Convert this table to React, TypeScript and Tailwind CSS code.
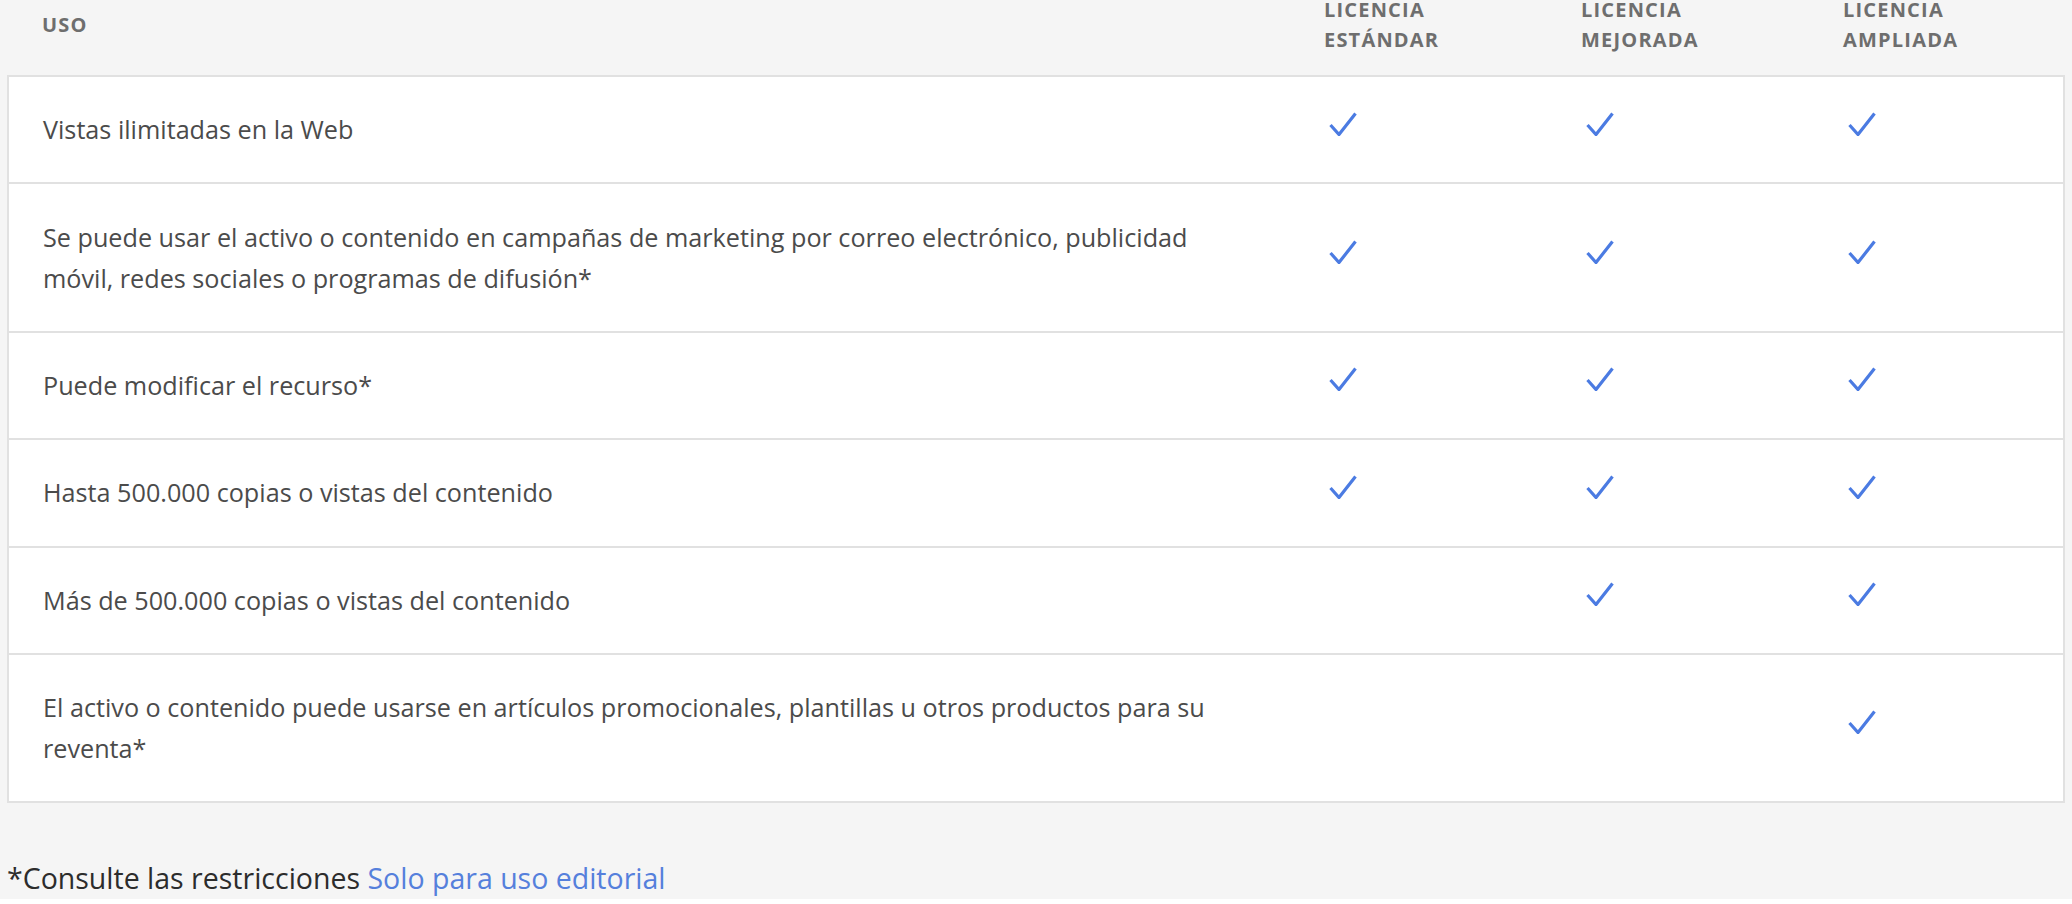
import React from "react";

type Row = { text: string; c: [boolean, boolean, boolean] };

const rows: Row[] = [
  { text: "Vistas ilimitadas en la Web", c: [true, true, true] },
  {
    text:
      "Se puede usar el activo o contenido en campañas de marketing por correo electrónico, publicidad móvil, redes sociales o programas de difusión*",
    c: [true, true, true],
  },
  { text: "Puede modificar el recurso*", c: [true, true, true] },
  { text: "Hasta 500.000 copias o vistas del contenido", c: [true, true, true] },
  { text: "Más de 500.000 copias o vistas del contenido", c: [false, true, true] },
  {
    text:
      "El activo o contenido puede usarse en artículos promocionales, plantillas u otros productos para su reventa*",
    c: [false, false, true],
  },
];

function Check() {
  return (
    <svg width="28" height="24" viewBox="0 0 28 24" fill="none" className="mb-[12px] ml-[5px]">
      <path d="M1.5 13 L10 22.5 L26.5 1.5" stroke="#4b7be2" strokeWidth="3.2" />
    </svg>
  );
}

export default function App() {
  return (
    <div
      className="min-h-screen bg-[#f5f5f5] px-[7px]"
      style={{ fontFamily: "'Open Sans', 'Noto Sans', sans-serif" }}
    >
      <div className="mt-[-5px] grid grid-cols-[1315px_257px_262px_1fr] border-x-2 border-transparent pb-[20px] text-[20px] font-bold uppercase leading-[30px] tracking-[1.2px] text-[#6e6e6e]">
        <div className="flex items-center pl-[33px]">Uso</div>
        <div>
          Licencia
          <br />
          Estándar
        </div>
        <div>
          Licencia
          <br />
          Mejorada
        </div>
        <div>
          Licencia
          <br />
          Ampliada
        </div>
      </div>

      <div className="border-2 border-[#e1e1e1] bg-white">
        {rows.map((r, i) => (
          <div
            key={i}
            className={
              "grid grid-cols-[1315px_257px_262px_1fr] " +
              (i > 0 ? "border-t-2 border-[#e1e1e1]" : "")
            }
          >
            <div className="py-[32.2px] pl-[34px] text-[25.2px] leading-[41px] text-[#4b4b4b]">
              <div className="max-w-[1185px]">{r.text}</div>
            </div>
            {r.c.map((on, j) => (
              <div key={j} className="flex items-center">
                {on ? <Check /> : null}
              </div>
            ))}
          </div>
        ))}
      </div>

      <div className="mt-[56px] text-[28.5px] leading-[38px] text-[#2c2c2c]">
        *Consulte las restricciones <span className="text-[#5580dc]">Solo para uso editorial</span>
      </div>
    </div>
  );
}
